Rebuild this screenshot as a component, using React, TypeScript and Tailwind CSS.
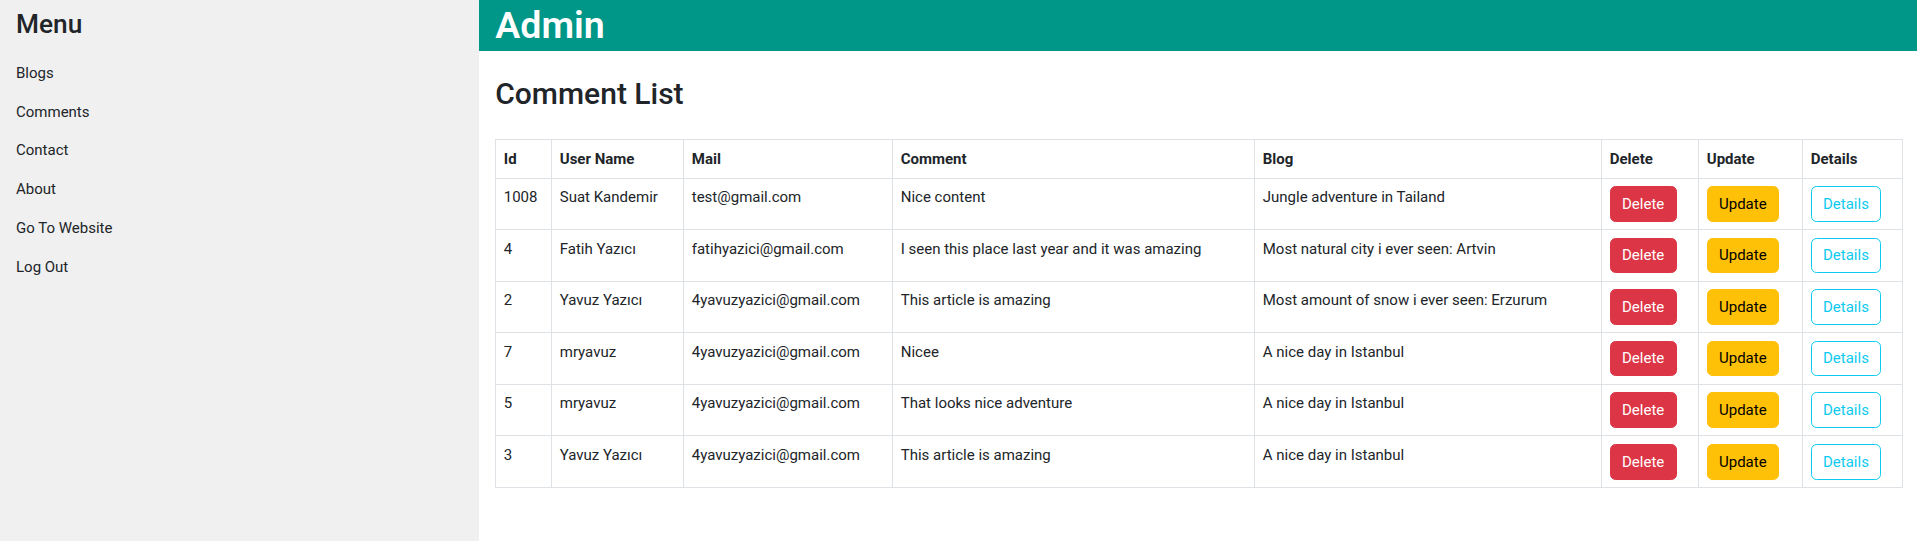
const menuItems = ["Blogs", "Comments", "Contact", "About", "Go To Website", "Log Out"];

type CommentRow = {
  id: number;
  userName: string;
  mail: string;
  comment: string;
  blog: string;
};

const comments: CommentRow[] = [
  { id: 1008, userName: "Suat Kandemir", mail: "test@gmail.com", comment: "Nice content", blog: "Jungle adventure in Tailand" },
  { id: 4, userName: "Fatih Yazıcı", mail: "fatihyazici@gmail.com", comment: "I seen this place last year and it was amazing", blog: "Most natural city i ever seen: Artvin" },
  { id: 2, userName: "Yavuz Yazıcı", mail: "4yavuzyazici@gmail.com", comment: "This article is amazing", blog: "Most amount of snow i ever seen: Erzurum" },
  { id: 7, userName: "mryavuz", mail: "4yavuzyazici@gmail.com", comment: "Nicee", blog: "A nice day in Istanbul" },
  { id: 5, userName: "mryavuz", mail: "4yavuzyazici@gmail.com", comment: "That looks nice adventure", blog: "A nice day in Istanbul" },
  { id: 3, userName: "Yavuz Yazıcı", mail: "4yavuzyazici@gmail.com", comment: "This article is amazing", blog: "A nice day in Istanbul" },
];

const headers = ["Id", "User Name", "Mail", "Comment", "Blog", "Delete", "Update", "Details"];
const colWidths = ["w-[56px]", "w-[132px]", "w-[209px]", "w-[362px]", "w-[347px]", "w-[97px]", "w-[104px]", "w-[100px]"];

const cell = "border border-[#dee2e6] px-[7.5px] py-[7.5px] text-left align-top leading-[22.5px]";
const btn = "h-[35.6px] px-[11.25px] rounded-[5.6px] border text-[15px] leading-[22.5px]";

function Sidebar() {
  return (
    <aside className="w-[25%] shrink-0 bg-[#f0f0f0] min-h-screen px-4 pt-[9px]">
      <h3 className="text-[26.25px] font-medium leading-[1.2] text-[#212529]">Menu</h3>
      <ul className="mt-[13.5px]">
        {menuItems.map((item) => (
          <li key={item} className="py-[8.1px] text-[15px] leading-[22.5px] text-[#212529]">
            {item}
          </li>
        ))}
      </ul>
    </aside>
  );
}

export default function App() {
  return (
    <div className="flex min-h-screen bg-white font-['Segoe_UI',Roboto,sans-serif] text-[15px] text-[#212529]">
      <Sidebar />
      <main className="flex-1 min-w-0">
        <div className="h-[51px] bg-[#009688] px-4 flex items-center">
          <h1 className="text-[37.5px] font-semibold leading-[1.2] text-white -mt-[1px]">Admin</h1>
        </div>
        <div className="pl-4 pr-[14px]">
          <h2 className="mt-[24.5px] mb-[27.5px] text-[30px] font-medium leading-[1.2]">Comment List</h2>
          <table className="w-full table-fixed border-collapse border border-[#dee2e6]">
            <colgroup>
              {colWidths.map((w, i) => (
                <col key={i} className={w} />
              ))}
            </colgroup>
            <thead>
              <tr>
                {headers.map((h) => (
                  <th key={h} className={`${cell} font-bold`}>
                    {h}
                  </th>
                ))}
              </tr>
            </thead>
            <tbody>
              {comments.map((c) => (
                <tr key={c.id}>
                  <td className={cell}>{c.id}</td>
                  <td className={cell}>{c.userName}</td>
                  <td className={cell}>{c.mail}</td>
                  <td className={cell}>{c.comment}</td>
                  <td className={cell}>{c.blog}</td>
                  <td className={cell}>
                    <button className={`${btn} bg-[#dc3545] border-[#dc3545] text-white`}>Delete</button>
                  </td>
                  <td className={cell}>
                    <button className={`${btn} bg-[#ffc107] border-[#ffc107] text-black`}>Update</button>
                  </td>
                  <td className={cell}>
                    <button className={`${btn} bg-white border-[#0dcaf0] text-[#0dcaf0]`}>Details</button>
                  </td>
                </tr>
              ))}
            </tbody>
          </table>
        </div>
      </main>
    </div>
  );
}
